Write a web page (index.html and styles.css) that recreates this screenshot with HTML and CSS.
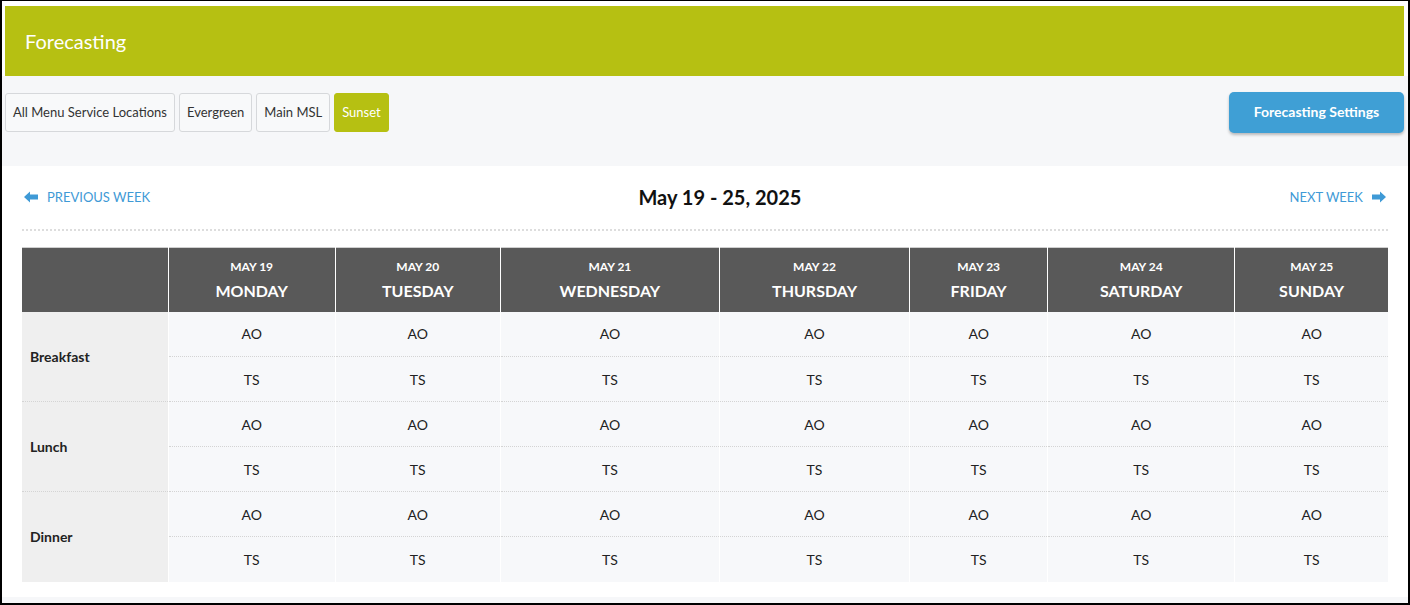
FILE: index.html
```html
<!DOCTYPE html>
<html>
<head>
<meta charset="utf-8">
<link rel="stylesheet" href="styles.css">
</head>
<body>
<div class="frame">
  <div class="head-wrap">
    <div class="header">Forecasting</div>
  </div>
  <div class="toolbar">
    <div class="tabs">
      <button class="tab">All Menu Service Locations</button>
      <button class="tab">Evergreen</button>
      <button class="tab">Main MSL</button>
      <button class="tab active">Sunset</button>
    </div>
    <button class="settings">Forecasting Settings</button>
  </div>
  <div class="panel-wrap">
    <div class="panel">
      <div class="nav">
        <a class="navlink prev"><svg width="14" height="12" viewBox="0 0 14 12"><path d="M0 6 L6 0.5 L6 3.5 L14 3.5 L14 8.5 L6 8.5 L6 11.5 Z" fill="#3f9ad6"/></svg><span>PREVIOUS WEEK</span></a>
        <div class="title">May 19 - 25, 2025</div>
        <a class="navlink next"><span>NEXT WEEK</span><svg width="14" height="12" viewBox="0 0 14 12"><path d="M14 6 L8 0.5 L8 3.5 L0 3.5 L0 8.5 L8 8.5 L8 11.5 Z" fill="#3f9ad6"/></svg></a>
      </div>
      <table class="grid">
        <colgroup>
          <col class="w0"><col class="w1"><col class="w2"><col class="w3"><col class="w4"><col class="w5"><col class="w6"><col class="w7">
        </colgroup>
        <thead>
          <tr>
            <th></th>
            <th><div class="d">MAY 19</div><div class="n">MONDAY</div></th>
            <th><div class="d">MAY 20</div><div class="n">TUESDAY</div></th>
            <th><div class="d">MAY 21</div><div class="n">WEDNESDAY</div></th>
            <th><div class="d">MAY 22</div><div class="n">THURSDAY</div></th>
            <th><div class="d">MAY 23</div><div class="n">FRIDAY</div></th>
            <th><div class="d">MAY 24</div><div class="n">SATURDAY</div></th>
            <th><div class="d">MAY 25</div><div class="n">SUNDAY</div></th>
          </tr>
        </thead>
        <tbody>
          <tr class="grp"><td class="meal" rowspan="2">Breakfast</td><td>AO</td><td>AO</td><td>AO</td><td>AO</td><td>AO</td><td>AO</td><td>AO</td></tr>
          <tr><td>TS</td><td>TS</td><td>TS</td><td>TS</td><td>TS</td><td>TS</td><td>TS</td></tr>
          <tr class="grp"><td class="meal" rowspan="2">Lunch</td><td>AO</td><td>AO</td><td>AO</td><td>AO</td><td>AO</td><td>AO</td><td>AO</td></tr>
          <tr><td>TS</td><td>TS</td><td>TS</td><td>TS</td><td>TS</td><td>TS</td><td>TS</td></tr>
          <tr class="grp"><td class="meal" rowspan="2">Dinner</td><td>AO</td><td>AO</td><td>AO</td><td>AO</td><td>AO</td><td>AO</td><td>AO</td></tr>
          <tr><td>TS</td><td>TS</td><td>TS</td><td>TS</td><td>TS</td><td>TS</td><td>TS</td></tr>
        </tbody>
      </table>
    </div>
  </div>
  <div class="foot"></div>
</div>
</body>
</html>
```

FILE: styles.css
```css
* { box-sizing: border-box; }
html, body { margin: 0; padding: 0; }
body {
  font-family: Lato, "Open Sans", "Liberation Sans", sans-serif;
  color: #222;
  background: #fff;
}
.frame {
  width: 1410px;
  height: 605px;
  border: 2px solid #000;
  border-top-width: 1px;
  background: #fff;
  overflow: hidden;
}
.head-wrap {
  padding: 5px 4px 0 3px;
}
.header {
  height: 70px;
  background: #b6c012;
  color: #fff;
  font-size: 20px;
  padding-left: 20px;
  display: flex;
  align-items: center;
  padding-bottom: 1px;
}
.toolbar {
  height: 90px;
  background: #f6f7f9;
  padding: 16px 4px 0 3px;
  display: flex;
  justify-content: space-between;
  align-items: flex-start;
}
.tabs {
  display: flex;
  gap: 4px;
  padding-top: 1px;
}
.tab {
  font-family: inherit;
  font-size: 13px;
  color: #333;
  background: #f8f9fa;
  border: 1px solid #d6d8db;
  border-radius: 3px;
  height: 39px;
  padding: 0 7px 1px;
  cursor: pointer;
}
.tab.active {
  background: #b6c012;
  border-color: #b6c012;
  color: #fff;
}
.settings {
  font-family: inherit;
  font-size: 14px;
  font-weight: 700;
  color: #fff;
  background: #3f9fd5;
  border: none;
  border-radius: 5px;
  height: 41px;
  width: 175px;
  padding-bottom: 3px;
  box-shadow: 0 2px 3px rgba(0,0,0,0.25);
}
.panel-wrap {
  padding: 0 4px 0 3px;
}
.panel {
  height: 431px;
  background: #fff;
  padding: 20px 16px 0 17px;
}
.nav {
  display: flex;
  align-items: center;
  justify-content: space-between;
  height: 22px;
  box-sizing: content-box;
  padding-bottom: 21px;
  border-bottom: 2px dotted #dddddd;
}
.navlink {
  display: flex;
  align-items: center;
  gap: 9px;
  color: #3f9ad6;
  font-size: 13px;
  text-decoration: none;
}
.prev { padding-left: 2px; }
.next { padding-right: 2px; }
.title {
  font-size: 20px;
  font-weight: 700;
  color: #111;
  line-height: 22px;
}
.grid {
  margin-top: 16px;
  width: 1366px;
  border-collapse: collapse;
  table-layout: fixed;
  border-top: 1px solid #cfcfcf;
}
.w0 { width: 146px; }
.w1 { width: 167px; }
.w2 { width: 165px; }
.w3 { width: 219px; }
.w4 { width: 190px; }
.w5 { width: 138px; }
.w6 { width: 187px; }
.w7 { width: 153px; }
.grid th {
  background: #595959;
  color: #fff;
  height: 64px;
  border-left: 1px solid #fff;
  padding: 0;
  text-align: center;
  vertical-align: middle;
}
.grid th:first-child { border-left: none; }
.grid th .d {
  font-size: 12px;
  font-weight: 700;
  line-height: 16px;
}
.grid th .n {
  font-size: 16px;
  font-weight: 700;
  line-height: 20px;
  margin-top: 6px;
}
.grid td {
  height: 45px;
  background: #f7f8fa;
  text-align: center;
  font-size: 14px;
  color: #222;
  border-left: 1px solid #fff;
  border-top: 1px dotted #d4d4d4;
  padding: 0;
}
.grid tbody tr:first-child td { border-top: none; }
.grid td.meal {
  background: #efefef;
  text-align: left;
  font-weight: 700;
  padding-left: 8px;
  border-left: none;
  border-right: 1px solid #fff;
}
.foot {
  height: 6px;
  background: #f6f7f9;
}
```
